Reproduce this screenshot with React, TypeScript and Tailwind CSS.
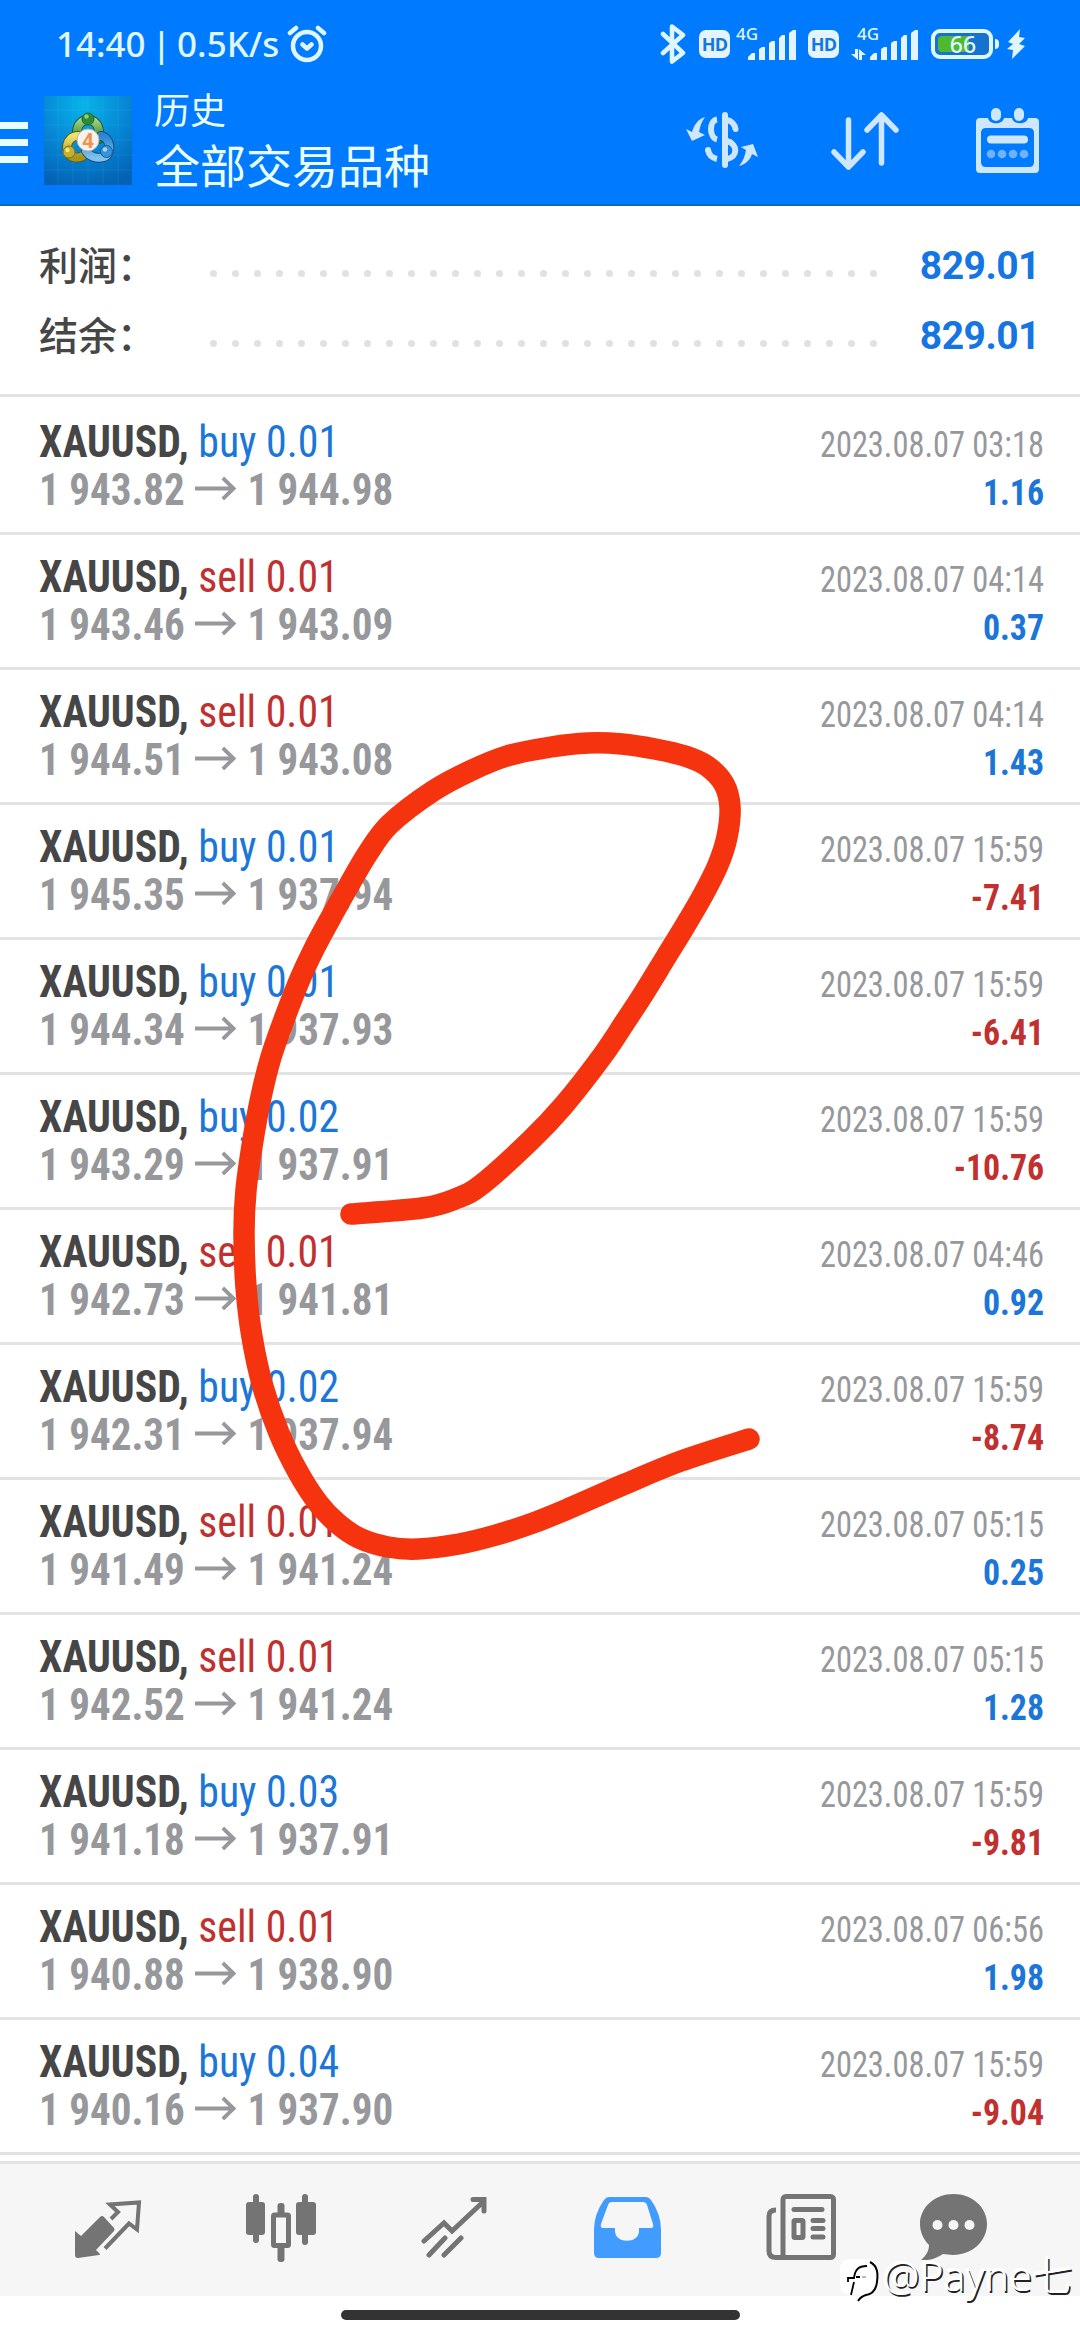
import React from 'react';

interface Deal {
  side: 'buy' | 'sell';
  volume: string;
  open: string;
  close: string;
  time: string;
  profit: string;
}

const deals: Deal[] = [
  { side: 'buy', volume: '0.01', open: '1 943.82', close: '1 944.98', time: '2023.08.07 03:18', profit: '1.16' },
  { side: 'sell', volume: '0.01', open: '1 943.46', close: '1 943.09', time: '2023.08.07 04:14', profit: '0.37' },
  { side: 'sell', volume: '0.01', open: '1 944.51', close: '1 943.08', time: '2023.08.07 04:14', profit: '1.43' },
  { side: 'buy', volume: '0.01', open: '1 945.35', close: '1 937.94', time: '2023.08.07 15:59', profit: '-7.41' },
  { side: 'buy', volume: '0.01', open: '1 944.34', close: '1 937.93', time: '2023.08.07 15:59', profit: '-6.41' },
  { side: 'buy', volume: '0.02', open: '1 943.29', close: '1 937.91', time: '2023.08.07 15:59', profit: '-10.76' },
  { side: 'sell', volume: '0.01', open: '1 942.73', close: '1 941.81', time: '2023.08.07 04:46', profit: '0.92' },
  { side: 'buy', volume: '0.02', open: '1 942.31', close: '1 937.94', time: '2023.08.07 15:59', profit: '-8.74' },
  { side: 'sell', volume: '0.01', open: '1 941.49', close: '1 941.24', time: '2023.08.07 05:15', profit: '0.25' },
  { side: 'sell', volume: '0.01', open: '1 942.52', close: '1 941.24', time: '2023.08.07 05:15', profit: '1.28' },
  { side: 'buy', volume: '0.03', open: '1 941.18', close: '1 937.91', time: '2023.08.07 15:59', profit: '-9.81' },
  { side: 'sell', volume: '0.01', open: '1 940.88', close: '1 938.90', time: '2023.08.07 06:56', profit: '1.98' },
  { side: 'buy', volume: '0.04', open: '1 940.16', close: '1 937.90', time: '2023.08.07 15:59', profit: '-9.04' },
];

// Freehand marker stroke, drawn over the list
const marker: [number, number][] = [
  [351, 1214], [422, 1208], [455, 1199], [481, 1185], [531, 1140], [564, 1105], [603, 1055], [625, 1022],
  [644, 993], [666, 957], [685, 926], [703, 895], [718, 865], [727, 837], [730, 807], [724, 784], [707, 766],
  [685, 756], [655, 749], [622, 744], [588, 743], [551, 747], [507, 756], [470, 771], [433, 791], [390, 824],
  [368, 853], [348, 887], [329, 921], [314, 949], [300, 979], [285, 1017], [271, 1057], [261, 1097], [253, 1140],
  [246, 1190], [244, 1233], [246, 1287], [252, 1337], [263, 1387], [279, 1433], [298, 1472], [318, 1503],
  [337, 1523], [359, 1538], [388, 1547], [418, 1549], [459, 1544], [496, 1535], [533, 1523], [570, 1508],
  [625, 1484], [681, 1461], [749, 1439],
];

function smoothPath(pts: [number, number][]) {
  let d = `M${pts[0][0]} ${pts[0][1]}`;
  for (let i = 0; i < pts.length - 1; i++) {
    const p0 = pts[i - 1] || pts[i];
    const p1 = pts[i];
    const p2 = pts[i + 1];
    const p3 = pts[i + 2] || p2;
    d += `C${p1[0] + (p2[0] - p0[0]) / 6} ${p1[1] + (p2[1] - p0[1]) / 6} ${p2[0] - (p3[0] - p1[0]) / 6} ${p2[1] - (p3[1] - p1[1]) / 6} ${p2[0]} ${p2[1]}`;
  }
  return d;
}

function Signal() {
  return (
    <svg width="48" height="30" viewBox="0 0 48 30" fill="#e4f4ff">
      <path d="M0 30v-3l4-4h3v7zM11 30V19l3-2h3v13zM21 30V13l3-2h3v19zM31 30V8l3-3h3v25zM41 30V3l4-3h3v30z" />
    </svg>
  );
}

function HdBadge() {
  return (
    <span className="w-[31px] h-7 rounded-[7px] bg-[#e4f4ff] text-[#1277e0] text-[18px] leading-7 font-bold text-center tracking-tighter font-[Open_Sans,sans-serif]">
      HD
    </span>
  );
}

function StatusBar() {
  return (
    <div className="h-[88px] pl-14 flex items-center text-[#dff6ff]">
      <span className="w-[225px] text-[35px] leading-[44px] font-medium whitespace-pre [word-spacing:-3px] font-['Noto_Sans',sans-serif]">14:40 | 0.5K/s</span>
      <svg className="ml-1.5" width="40" height="40" viewBox="0 0 40 40" fill="none" stroke="currentColor" strokeWidth="4.500" strokeLinecap="round">
        <circle cx="20" cy="22" r="14" />
        <path d="M15.500 20.500l4.500 4 4.500-4M3 9l6-5M37 9l-6-5" strokeLinejoin="round" />
      </svg>
      <svg className="ml-[333px]" width="26" height="40" viewBox="0 0 26 40" fill="none" stroke="currentColor" strokeWidth="4.500" strokeLinejoin="round" strokeLinecap="round">
        <path d="M3 10l20 19-11 8.500V2.500l11 8.500L3 29" />
      </svg>
      <div className="ml-[13px] flex"><HdBadge /></div>
      <div className="ml-1.5 w-[61px] h-8 flex items-end relative">
        <span className="absolute left-0 -top-[3px] text-[17px] leading-[17px] font-medium font-['Noto_Sans',sans-serif]">4G</span>
        <div className="ml-3"><Signal /></div>
      </div>
      <div className="ml-[11px] flex"><HdBadge /></div>
      <div className="ml-3 w-[67px] h-8 flex items-end relative">
        <span className="absolute left-1.5 -top-[3px] text-[17px] leading-[17px] font-medium font-['Noto_Sans',sans-serif]">4G</span>
        <svg width="15" height="11" viewBox="0 0 15 11" fill="currentColor">
          <path d="M4 0h3v11L0 5h4zM8 11V0l7 6h-4v5z" />
        </svg>
        <div className="ml-1"><Signal /></div>
      </div>
      <div className="ml-[13px] w-[62px] h-[30px] rounded-[9px] border-4 border-current bg-[#1672cf] relative">
        <div className="absolute left-[3px] top-[3px] w-[31px] h-4 rounded-l-sm bg-[#4fb92f]" />
        <span className="absolute inset-0 pl-0.5 text-center text-[23px] leading-[23px] font-medium font-['Noto_Sans',sans-serif]">66</span>
      </div>
      <div className="ml-0.5 w-1 h-2.5 rounded-r bg-current" />
      <svg className="ml-2" width="18" height="30" viewBox="0 0 18 30" fill="currentColor">
        <path d="M13 0L1 13l5 2-6 5 6 1-1 9 13-13-6-2 6-6-6-1z" />
      </svg>
    </div>
  );
}

function AppLogo() {
  return (
    <svg width="88" height="89" viewBox="0 0 88 89">
      <defs>
        <radialGradient id="sky" cx="0.45" cy="0.1" r="0.95">
          <stop offset="0" stopColor="#08b4ea" />
          <stop offset="0.5" stopColor="#0688d6" />
          <stop offset="1" stopColor="#0461b4" />
        </radialGradient>
        <linearGradient id="green" x1="0" y1="0" x2="0" y2="1">
          <stop offset="0" stopColor="#a5cf84" />
          <stop offset="1" stopColor="#2f8a25" />
        </linearGradient>
        <linearGradient id="gold" x1="0" y1="0" x2="0" y2="1">
          <stop offset="0" stopColor="#efe36a" />
          <stop offset="1" stopColor="#a8931b" />
        </linearGradient>
        <linearGradient id="azure" x1="0" y1="0" x2="0" y2="1">
          <stop offset="0" stopColor="#2c86cf" />
          <stop offset="1" stopColor="#7cc2ec" />
        </linearGradient>
      </defs>
      <rect width="88" height="89" fill="url(#sky)" />
      <path d="M14 0v89M29 0v89M44 0v89M59 0v89M74 0v89M0 14h88M0 29h88M0 44h88M0 59h88M0 74h88" stroke="#5cc4f2" strokeOpacity="0.14" />
      <g fill="none" strokeLinecap="round">
        <path d="M33 36c0-16 22-16 22 0v7" stroke="#1c5a30" strokeWidth="10" />
        <path d="M33 36c0-16 22-16 22 0v7" stroke="url(#green)" strokeWidth="8" />
        <path d="M34 40c-12 0-15 17-5 21 4 1 8 1 11-2" stroke="#5a5a20" strokeWidth="10" />
        <path d="M34 40c-12 0-15 17-5 21 4 1 8 1 11-2" stroke="url(#gold)" strokeWidth="8" />
        <path d="M57 40c9 1 12 17 3 21-7 2-14 0-18-6" stroke="#124d86" strokeWidth="10" />
        <path d="M57 40c9 1 12 17 3 21-7 2-14 0-18-6" stroke="url(#azure)" strokeWidth="8" />
      </g>
      <circle cx="44" cy="23" r="6" fill="#2e8a34" stroke="#1f6a2e" />
      <circle cx="42.500" cy="20.500" r="2.200" fill="#8fcf83" />
      <circle cx="25" cy="56" r="6" fill="#c7b02a" stroke="#7d701c" />
      <circle cx="23.500" cy="54" r="2.200" fill="#f1e58a" />
      <circle cx="62.500" cy="55.500" r="6" fill="#3a92d6" stroke="#135c9c" />
      <circle cx="61" cy="53.500" r="2.200" fill="#9bd6f7" />
      <circle cx="44" cy="44" r="11" fill="#f6f2ef" stroke="#b9b2a6" />
      <text x="44" y="51.500" textAnchor="middle" fontSize="21" fontWeight="700" fontFamily="Roboto, sans-serif" fill="#f3924a">4</text>
    </svg>
  );
}

function Header() {
  return (
    <header className="h-[206px] bg-[#007aff] border-b-2 border-[#1767b4]">
      <StatusBar />
      <div className="h-[116px] flex items-start">
        <div className="w-7 mt-[34px] flex flex-col gap-2.5">
          <div className="h-[7px] bg-[#e8fcff]" />
          <div className="h-[7px] bg-[#e8fcff]" />
          <div className="h-[7px] bg-[#e8fcff]" />
        </div>
        <div className="ml-4 mt-2"><AppLogo /></div>
        <div className="ml-[22px] -mt-0.5 w-[532px] text-[#eaffff] font-['Noto_Sans_CJK_SC',sans-serif]">
          <p className="text-[36px] leading-[44px]">历史</p>
          <h1 className="text-[46px] leading-[66px]">全部交易品种</h1>
        </div>
        <svg className="mt-[23px]" width="74" height="57" viewBox="0 0 74 57" fill="none" stroke="#cfe6ff">
          <path d="M39 4v50" strokeWidth="6" strokeLinecap="round" />
          <path d="M41 9c5 1 8 5 8.500 9" strokeWidth="6" strokeLinecap="round" />
          <path d="M41 30c11 3 11 16 0 18" strokeWidth="6" />
          <path d="M31 8.500c-8 1-8 18 0 20M22 39c1 5 4 8 9 9" strokeWidth="6" />
          <path d="M22 39v.1" strokeWidth="6" strokeLinecap="round" />
          <path d="M19 6C12 8 8 14 6 21l-6-3 6 12 13-6-6-3c1-6 3-11 6-15zM53 55c7-2 11-6 13-12l6 3-5-13-12 3 5 3c-1 6-3 11-7 16z" fill="#cfe6ff" stroke="none" />
        </svg>
        <svg className="ml-[69px] mt-[23px]" width="70" height="60" viewBox="0 0 70 60" fill="none" stroke="#cfe6ff" strokeWidth="5.500" strokeLinecap="round" strokeLinejoin="round">
          <path d="M19.500 9v47M5 41l14.500 15L34 41M52.500 52V4M38 19L52.500 4 67 19" />
        </svg>
        <svg className="ml-[77px] mt-5" width="64" height="66" viewBox="0 0 64 66" fill="#cfe6ff">
          <path fillRule="evenodd" d="M4 10h8c1 7 15 7 16 0h8c1 7 15 7 16 0h7q4 0 4 4v47q0 4-4 4H4q-4 0-4-4V14q0-4 4-4zM10 20q-5 0-5 5v29q0 5 5 5h43q5 0 5-5V25q0-5-5-5z" />
          <rect x="15" y="0" width="10" height="13" rx="5" />
          <rect x="38" y="0" width="10" height="13" rx="5" />
          <rect x="11" y="27.500" width="41" height="8" rx="4" />
          <g fill="#6fb3ff">
            <circle cx="15" cy="46" r="4.300" />
            <circle cx="26" cy="46" r="4.300" />
            <circle cx="37" cy="46" r="4.300" />
            <circle cx="48" cy="46" r="4.300" />
          </g>
        </svg>
      </div>
    </header>
  );
}

function SummaryRow({ label, value }: { label: string; value: string }) {
  return (
    <div className="h-[70px] pl-[39px] pr-10 flex items-center">
      <span className="w-[171px] -mt-[5px] text-[39px] font-medium text-[#464646] font-['Noto_Sans_CJK_SC',sans-serif]">{label}</span>
      <div className="flex gap-[15px] mt-[15px]">
        {Array.from({ length: 31 }, (_, i) => (
          <i key={i} className="size-[7px] rounded-full bg-[#e1e1e1]" />
        ))}
      </div>
      <span className="ml-auto mt-px text-[39px] font-bold tracking-[-0.5px] text-[#1575e2] font-[Roboto,sans-serif]">{value}</span>
    </div>
  );
}

function DealRow({ deal }: { deal: Deal }) {
  return (
    <div className="h-[135px] pt-[18px] pl-[39px] pr-9 border-b-3 border-[#e3e3e3] font-['Roboto_Condensed',Roboto,sans-serif] [font-stretch:75%]">
      <div className="h-12 leading-[48px] flex justify-between items-baseline">
        <p className="text-[44px] whitespace-pre text-[#464646] origin-left scale-x-[0.95]">
          <b>XAUUSD, </b>
          <span className={deal.side === 'buy' ? 'text-[#1b76d8]' : 'text-[#c0302f]'}>{deal.side} {deal.volume}</span>
        </p>
        <p className="text-[36px] text-[#97989b] origin-right scale-x-[0.9]">{deal.time}</p>
      </div>
      <div className="h-12 leading-[48px] flex justify-between items-baseline font-bold">
        <p className="text-[44px] text-[#97989b] flex items-center origin-left scale-x-[0.933]">
          {deal.open}
          <svg className="mx-[11px] -mt-1" width="45" height="24" viewBox="0 0 45 24" fill="none" stroke="currentColor" strokeWidth="4">
            <path d="M0 12.500h42M30 2l11.500 10.500L30 23" />
          </svg>
          {deal.close}
        </p>
        <p className={deal.profit.startsWith('-') ? 'text-[36px] text-[#c0302f] origin-right scale-x-[0.94]' : 'text-[36px] text-[#1b76d8] origin-right scale-x-[0.94]'}>{deal.profit}</p>
      </div>
    </div>
  );
}

function TabBar() {
  return (
    <nav className="mt-1.5 h-[135px] pt-[30px] pl-[75px] bg-[#f6f6f6] border-t-3 border-[#e3e3e3] flex text-[#747474]">
      <svg className="mt-1.5" width="67" height="58" viewBox="0 0 67 58" fill="currentColor">
        <path d="M0 31l6 5 19-19q2-2 4 0l10 11q1 2 0 3L21 50l4 4q0 1-1 1L3 58q-3 0-3-3z" />
        <path d="M36 19l7-7-8-7.500 29-2-2 27-8-6-24 25" fill="none" stroke="currentColor" strokeWidth="4" />
      </svg>
      <svg className="ml-[104px]" width="70" height="68" viewBox="0 0 70 68" fill="currentColor">
        <rect x="7" y="0" width="6" height="49" rx="3" />
        <rect x="0" y="8" width="19" height="33" rx="3" />
        <rect x="56" y="0" width="6" height="51" rx="3" />
        <rect x="50" y="8" width="20" height="33" rx="3" />
        <rect x="31.500" y="9" width="7" height="14" rx="3" />
        <rect x="31.500" y="51" width="7" height="17" rx="3" />
        <rect x="27.500" y="21" width="15" height="30.500" rx="1" fill="none" stroke="currentColor" strokeWidth="5" />
      </svg>
      <svg className="ml-[105px] mt-[3px]" width="66" height="61" viewBox="0 0 66 61" fill="none" stroke="currentColor" strokeWidth="5" strokeLinecap="round">
        <path d="M3 44l20-18 8 8L62 5M52 2.500h11V14M8 58l16-17M23 58l17-17" />
      </svg>
      <svg className="ml-[107px] mt-[3px]" width="67" height="61" viewBox="0 0 67 61" fill="#429bff">
        <path fillRule="evenodd" d="M15 0h37q3 0 5 3 10 14 10 30v23q0 5-5 5H5q-5 0-5-5V33Q0 17 10 3q2-3 5-3zM18 5q-3 0-4 3L7 27q-1 4 2 4h12v3c0 13 24 13 24 0v-3h12q3 0 2-4L53 8q-1-3-4-3z" />
      </svg>
      <svg className="ml-[105px]" width="70" height="66" viewBox="0 0 70 66" fill="none" stroke="currentColor" strokeWidth="5">
        <rect x="17" y="2.500" width="50.500" height="61" rx="3" />
        <path d="M10 16q-7 0-7 6v35q0 6.500 7 6.500h10" />
        <path d="M28 15.500h28M47 26.500h10M47 34.500h10M47 43h10" strokeLinecap="round" />
        <rect x="28" y="26.500" width="9" height="17" rx="1" />
      </svg>
      <svg className="ml-[84px]" width="67" height="66" viewBox="0 0 67 66" fill="currentColor">
        <path d="M33.500 0C52 0 67 13 67 30S52 61 33 61c-4 0-7-1-10-1-6 4-13 7-22 6 5-4 8-9 8-15C3 45 0 38 0 30 0 13 15 0 33.500 0z" />
        <g fill="#f6f6f6">
          <circle cx="17.500" cy="31" r="5" />
          <circle cx="33.500" cy="31" r="5" />
          <circle cx="49.500" cy="31" r="5" />
        </g>
      </svg>
    </nav>
  );
}

function Watermark() {
  return (
    <div className="absolute left-[840px] top-[2251px] flex items-start text-white">
      <svg className="mt-2" width="40" height="44" viewBox="0 0 40 44">
        <path d="M10 0h17q11 1 11 15 0 17-19 23l2-2H10Q0 35 0 26V11Q0 1 10 0z" fill="#fff" />
        <g fill="none" stroke="#000">
          <path d="M30 3c8 4 8 12 7 20-1 8-4 12-11 13-4 1-6 3-8 6" strokeWidth="2" />
          <path d="M11 36l3-13M8 23v-4h6c1-8 4-12 13-12M16 18h4" strokeWidth="1.800" />
          <path d="M22 18h4" strokeWidth="1" stroke="#777" />
        </g>
      </svg>
      <span className="ml-[3px] text-[41px] leading-[48px] font-light whitespace-nowrap [text-shadow:1.5px_1.5px_0_#222,-1px_-1px_0_#fff,0_0_3px_#fff] font-['Noto_Sans','Noto_Sans_CJK_SC',sans-serif]">@Payne七</span>
    </div>
  );
}

export default function App() {
  return (
    <div className="relative w-[1080px] h-[2340px] overflow-hidden bg-white">
      <Header />
      <section className="h-[191px] pt-[25px] border-b-3 border-[#e3e3e3]">
        <SummaryRow label="利润：" value="829.01" />
        <SummaryRow label="结余：" value="829.01" />
      </section>
      <main className="pt-[3px]">
        {deals.map((deal, i) => (
          <DealRow key={i} deal={deal} />
        ))}
      </main>
      <TabBar />
      <div className="mt-3.5 mx-auto w-[399px] h-2.5 rounded-full bg-[#333333]" />

      <svg className="absolute left-0 top-0 pointer-events-none" width="1080" height="2340" fill="none">
        <path d={smoothPath(marker)} stroke="#f5340f" strokeWidth="21.500" strokeLinecap="round" strokeLinejoin="round" />
      </svg>
      <Watermark />
    </div>
  );
}
